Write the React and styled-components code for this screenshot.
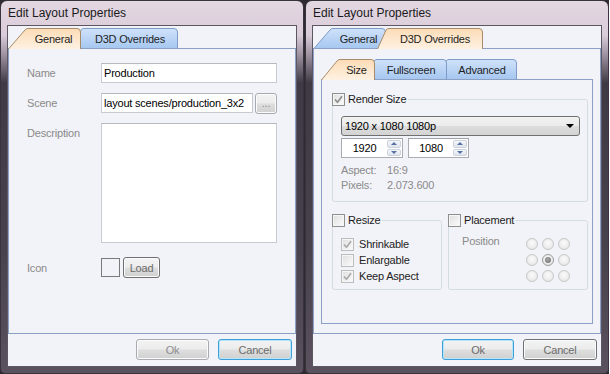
import React, { useId } from "react";
import styled, { createGlobalStyle } from "styled-components";

const GlobalStyle = createGlobalStyle`
  html, body {
    margin: 0;
    padding: 0;
    background: #fff;
  }
  body {
    font-family: "Liberation Sans", Arial, sans-serif;
    font-size: 11px;
    letter-spacing: -0.2px;
    color: #1e1e1e;
  }
`;

const Desktop = styled.div`
  display: flex;
  gap: 1px;
  width: 609px;
  height: 374px;
  background: #2e2a31;
`;

const Window = styled.div`
  width: 304px;
  height: 374px;
  box-sizing: border-box;
  border: 1px solid #38333c;
  border-radius: 7px 7px 5px 5px;
  background: linear-gradient(180deg, #e3d7e2 0px, #dacdd9 34px, #a497a6 52px, #3f3a44 82px, #48424d 250px, #5a525e 100%);
  display: flex;
  flex-direction: column;
  padding: 0 6px 6px;
`;

const TitleBar = styled.div`
  height: 24px;
  line-height: 24px;
  padding-left: 1px;
  font-size: 12px;
  letter-spacing: 0;
  color: #1a1a1a;
`;

const Client = styled.div`
  flex: 1;
  display: flex;
  flex-direction: column;
  border: 1px solid #5d5763;
  background: #f2f3f8;
  padding-top: 2px;
`;

const TabControl = styled.div`
  flex: 1;
  display: flex;
  flex-direction: column;
`;

const TabStrip = styled.div`
  display: flex;
  height: 20px;
  align-items: flex-start;
`;

const Tab = styled.div`
  position: relative;
  flex: none;
  box-sizing: border-box;
  width: ${(p) => p.$w}px;
  height: 21px;
  margin-left: ${(p) => -p.$overlap}px;
  padding-left: ${(p) => p.$slant}px;
  z-index: ${(p) => p.$z};
  display: flex;
  align-items: center;
  justify-content: center;
  line-height: 20px;
  color: #1e1e1e;
`;

const TabLabel = styled.span`
  position: relative;
  z-index: 1;
`;

const TabSvg = styled.svg`
  position: absolute;
  left: 0;
  top: 0;
`;

const TabPanel = styled.div`
  flex: 1;
  position: relative;
  z-index: 4;
  border: 1px solid #8ba0c4;
  background: #f2f3f8;
  display: flex;
  flex-direction: column;
  padding: ${(p) => p.$pad};
`;

const ButtonBar = styled.div`
  display: flex;
  justify-content: flex-end;
  gap: 9px;
  padding: 5px 4px 6px 0;
`;

const Button = styled.div`
  box-sizing: border-box;
  width: ${(p) => p.$w}px;
  height: 21px;
  border: 1px solid ${(p) => (p.$focus ? "#3c9fd8" : p.$disabled ? "#a7abb0" : "#707070")};
  border-radius: 3px;
  background: linear-gradient(180deg, #f3f3f3 0%, #ececec 48%, #dedede 52%, #d0d0d0 100%);
  box-shadow: inset 0 0 0 1px ${(p) => (p.$focus ? "#b5e6fb" : "#fbfbfb")};
  color: ${(p) => (p.$disabled ? "#8d8d8d" : "#6b6b6b")};
  display: flex;
  align-items: center;
  justify-content: center;
  font-size: 11px;
`;

/* General page */
const FormGrid = styled.div`
  display: grid;
  grid-template-columns: 74px 176px;
  grid-template-rows: 20px 20px 124px 21px;
  row-gap: 10px;
`;

const FieldLabel = styled.div`
  color: #8a8a8a;
  align-self: ${(p) => (p.$top ? "start" : "center")};
  padding-top: ${(p) => (p.$top ? 4 : 0)}px;
`;

const TextBox = styled.div`
  box-sizing: border-box;
  width: ${(p) => p.$w}px;
  height: 20px;
  border: 1px solid #c6cad2;
  border-top-color: #b4b8c0;
  background: #fff;
  padding: 0 2px;
  display: flex;
  align-items: center;
  white-space: nowrap;
  overflow: hidden;
  color: #000;
`;

const MemoBox = styled.div`
  box-sizing: border-box;
  width: 176px;
  height: 120px;
  border: 1px solid #c6cad2;
  border-top-color: #b4b8c0;
  background: #fff;
`;

const InlineRow = styled.div`
  display: flex;
  align-items: center;
  gap: ${(p) => p.$gap}px;
`;

const IconWell = styled.div`
  box-sizing: border-box;
  width: 19px;
  height: 19px;
  border: 1px solid #7a7a7a;
`;

/* Size page */
const SizeBody = styled.div`
  display: flex;
  flex-direction: column;
  padding: 13px 0 0 10px;
`;

const Group = styled.fieldset`
  box-sizing: border-box;
  width: ${(p) => p.$w}px;
  margin: 0;
  padding: 0;
  min-width: 0;
  border: 1px solid #d3dde4;
  border-radius: 3px;
`;

const Legend = styled.legend`
  display: flex;
  align-items: center;
  gap: 3px;
  padding: 0 2px 0 0;
  margin-left: -1px;
  line-height: 13px;
  color: #1a1a1a;
`;

const Check = styled.span`
  flex: none;
  box-sizing: border-box;
  width: 13px;
  height: 13px;
  border: 1px solid ${(p) => (p.$dim ? "#bdbdbd" : "#8e8f8f")};
  box-shadow: inset 0 0 0 1px #f6f6f6;
  background: linear-gradient(135deg, #dedede, #fcfcfc);
  display: flex;
  align-items: center;
  justify-content: center;
`;

const RenderBody = styled.div`
  display: flex;
  flex-direction: column;
  padding: 10px 7px 8px 8px;
`;

const Combo = styled.div`
  box-sizing: border-box;
  height: 20px;
  border: 1px solid #707070;
  border-radius: 3px;
  background: linear-gradient(180deg, #f2f2f2 0%, #ebebeb 50%, #dddddd 50%, #d3d3d3 100%);
  display: flex;
  align-items: center;
  justify-content: space-between;
  padding: 0 5px 0 3px;
  color: #000;
  &::after {
    content: "";
    border-left: 4px solid transparent;
    border-right: 4px solid transparent;
    border-top: 4px solid #000;
  }
`;

const SpinRow = styled.div`
  display: flex;
  gap: 5px;
  margin-top: 2px;
`;

const Spin = styled.div`
  box-sizing: border-box;
  width: ${(p) => p.$w}px;
  height: 20px;
  border: 1px solid #abadb3;
  border-top-color: #9ea1a8;
  background: #fff;
  display: flex;
`;

const SpinValue = styled.div`
  flex: 1;
  display: flex;
  align-items: center;
  justify-content: center;
  color: #000;
`;

const SpinButtons = styled.div`
  width: 14px;
  margin: 1px 1px 1px 0;
  display: flex;
  flex-direction: column;
  gap: 1px;
`;

const SpinHalf = styled.div`
  flex: 1;
  border: 1px solid #cdd3dd;
  border-radius: 2px;
  background: linear-gradient(180deg, #f4f6fa, #dfe5ee);
  display: flex;
  align-items: center;
  justify-content: center;
  &::after {
    content: "";
    border-left: 3px solid transparent;
    border-right: 3px solid transparent;
    ${(p) => (p.$up ? "border-bottom: 3px solid #5670a0;" : "border-top: 3px solid #5670a0;")}
  }
`;

const InfoGrid = styled.div`
  display: grid;
  grid-template-columns: 46px auto;
  line-height: 15px;
  margin-top: 5px;
  color: #8a8a8a;
`;

const GroupRow = styled.div`
  display: flex;
  gap: 6px;
  margin-top: 12px;
`;

const OptionList = styled.div`
  display: flex;
  flex-direction: column;
  padding: 9px 0 5px 8px;
`;

const Option = styled.div`
  display: flex;
  align-items: center;
  gap: 5px;
  height: 16px;
  color: #222;
`;

const PlacementBody = styled.div`
  display: grid;
  grid-template-columns: 62px repeat(3, 16px);
  grid-auto-rows: 16px;
  padding: 9px 0 5px 13px;
  align-items: center;
  justify-items: center;
`;

const PositionLabel = styled.div`
  justify-self: start;
  align-self: start;
  margin-top: -1px;
  color: #8a8a8a;
`;

const Radio = styled.span`
  box-sizing: border-box;
  width: 12px;
  height: 12px;
  border-radius: 50%;
  border: 1px solid ${(p) => (p.$on ? "#9a9a9a" : "#c7c7c7")};
  background: radial-gradient(circle at 50% 40%, #fbfbfb, #e2e2e2);
  display: flex;
  align-items: center;
  justify-content: center;
  &::after {
    content: "";
    width: 6px;
    height: 6px;
    border-radius: 50%;
    background: ${(p) => (p.$on ? "radial-gradient(circle at 45% 40%, #a8a8a8, #6a6a6a)" : "transparent")};
  }
`;

function TabShape({ w, slant, selected }) {
  const id = useId();
  const h = 21;
  const outline = `M0.5 ${h} L${slant - 1} 2 Q${slant} 0.5 ${slant + 2} 0.5 L${w - 4} 0.5 Q${w - 0.5} 0.5 ${w - 0.5} 4 L${w - 0.5} ${h}`;
  return (
    <TabSvg width={w} height={h} viewBox={`0 0 ${w} ${h}`}>
      <defs>
        <linearGradient id={id} x1="0" y1="0" x2="0" y2="1">
          <stop offset="0" stopColor={selected ? "#fcdcb6" : "#d0e2fa"} />
          <stop offset="1" stopColor={selected ? "#fef1e2" : "#a4c6f0"} />
        </linearGradient>
      </defs>
      <path d={outline + " Z"} fill={`url(#${id})`} />
      <path d={outline} fill="none" stroke={selected ? "#a68c6a" : "#7e9bc9"} />
    </TabSvg>
  );
}

function Tabs({ tabs, active }) {
  return (
    <TabStrip>
      {tabs.map((t, i) => {
        const selected = i === active;
        return (
          <Tab key={t.label} $w={t.w} $slant={t.slant} $overlap={t.overlap || 0} $z={selected ? 6 : 3 - i}>
            <TabShape w={t.w} slant={t.slant} selected={selected} />
            <TabLabel>{t.label}</TabLabel>
          </Tab>
        );
      })}
    </TabStrip>
  );
}

function CheckBox({ checked, dim }) {
  return (
    <Check $dim={dim}>
      {checked && (
        <svg width="9" height="9" viewBox="0 0 9 9">
          <polyline points="1,4.5 3.5,7.2 8,1.2" fill="none" stroke={dim ? "#a9a9a9" : "#8c8c8c"} strokeWidth="1.6" />
        </svg>
      )}
    </Check>
  );
}

const outerTabs = [
  { label: "General", w: 73, slant: 18 },
  { label: "D3D Overrides", w: 106, slant: 10, overlap: 9 },
];

const innerTabs = [
  { label: "Size", w: 54, slant: 17 },
  { label: "Fullscreen", w: 82, slant: 10, overlap: 10 },
  { label: "Advanced", w: 80, slant: 10, overlap: 10 },
];

function SpinBox({ w, value }) {
  return (
    <Spin $w={w}>
      <SpinValue>{value}</SpinValue>
      <SpinButtons>
        <SpinHalf $up />
        <SpinHalf />
      </SpinButtons>
    </Spin>
  );
}

function GeneralPage() {
  return (
    <TabPanel $pad="14px 18px 0">
      <FormGrid>
        <FieldLabel>Name</FieldLabel>
        <TextBox $w={176}>Production</TextBox>
        <FieldLabel>Scene</FieldLabel>
        <InlineRow $gap={2}>
          <TextBox $w={153}>layout scenes/production_3x2</TextBox>
          <Button $w={22} $disabled>...</Button>
        </InlineRow>
        <FieldLabel $top>Description</FieldLabel>
        <MemoBox />
        <FieldLabel>Icon</FieldLabel>
        <InlineRow $gap={3}>
          <IconWell />
          <Button $w={37}>Load</Button>
        </InlineRow>
      </FormGrid>
    </TabPanel>
  );
}

function SizePage() {
  const cells = [0, 1, 2, 3, 4, 5, 6, 7, 8];
  return (
    <TabPanel $pad="0">
      <SizeBody>
        <Group $w={256}>
          <Legend>
            <CheckBox checked />
            Render Size
          </Legend>
          <RenderBody>
            <Combo>1920 x 1080 1080p</Combo>
            <SpinRow>
              <SpinBox w={62} value="1920" />
              <SpinBox w={61} value="1080" />
            </SpinRow>
            <InfoGrid>
              <span>Aspect:</span>
              <span>16:9</span>
              <span>Pixels:</span>
              <span>2.073.600</span>
            </InfoGrid>
          </RenderBody>
        </Group>
        <GroupRow>
          <Group $w={110}>
            <Legend>
              <CheckBox />
              Resize
            </Legend>
            <OptionList>
              <Option>
                <CheckBox checked dim />
                Shrinkable
              </Option>
              <Option>
                <CheckBox dim />
                Enlargable
              </Option>
              <Option>
                <CheckBox checked dim />
                Keep Aspect
              </Option>
            </OptionList>
          </Group>
          <Group $w={140}>
            <Legend>
              <CheckBox />
              Placement
            </Legend>
            <PlacementBody>
              {cells.map((c) => (
                <React.Fragment key={c}>
                  {c % 3 === 0 && (c === 0 ? <PositionLabel>Position</PositionLabel> : <span />)}
                  <Radio $on={c === 4} />
                </React.Fragment>
              ))}
            </PlacementBody>
          </Group>
        </GroupRow>
      </SizeBody>
    </TabPanel>
  );
}

export default function App() {
  return (
    <>
      <GlobalStyle />
      <Desktop>
        <Window>
          <TitleBar>Edit Layout Properties</TitleBar>
          <Client>
            <TabControl>
              <Tabs tabs={outerTabs} active={0} />
              <GeneralPage />
            </TabControl>
            <ButtonBar>
              <Button $w={73} $disabled>Ok</Button>
              <Button $w={74} $focus>Cancel</Button>
            </ButtonBar>
          </Client>
        </Window>
        <Window>
          <TitleBar>Edit Layout Properties</TitleBar>
          <Client>
            <TabControl>
              <Tabs tabs={outerTabs} active={1} />
              <TabPanel $pad="10px 7px 9px">
                <TabControl>
                  <Tabs tabs={innerTabs} active={0} />
                  <SizePage />
                </TabControl>
              </TabPanel>
            </TabControl>
            <ButtonBar>
              <Button $w={72} $focus>Ok</Button>
              <Button $w={74}>Cancel</Button>
            </ButtonBar>
          </Client>
        </Window>
      </Desktop>
    </>
  );
}
